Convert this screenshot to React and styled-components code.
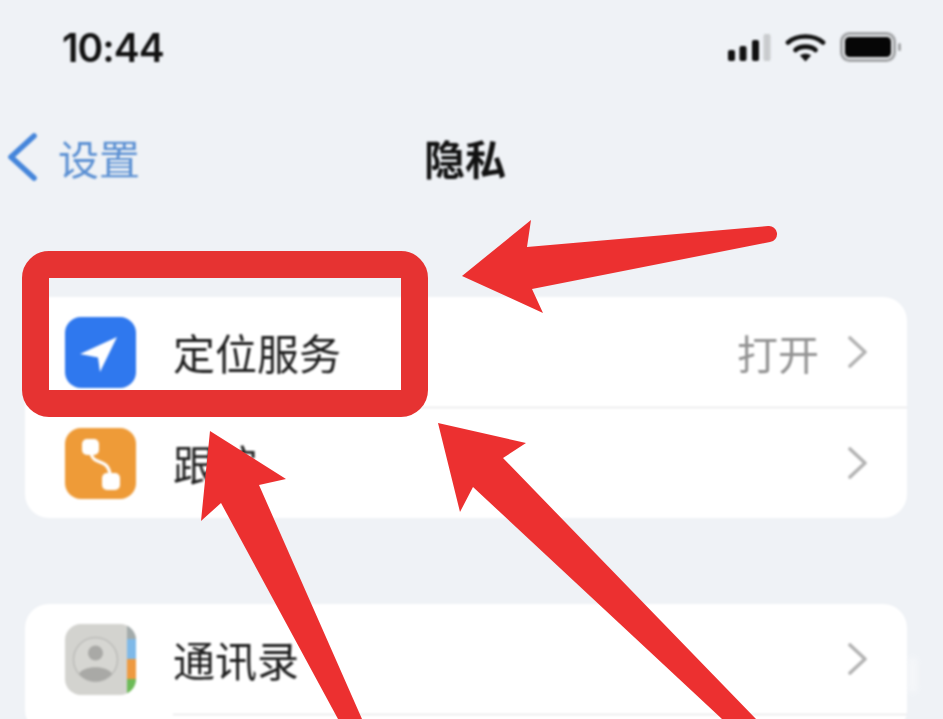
import React from 'react'
import styled, { createGlobalStyle } from 'styled-components'

const GlobalStyle = createGlobalStyle`
    html, body {
        margin: 0;
        padding: 0;
        background: #eff2f6;
    }
`;

const Page = styled.div`
    position: relative;
    width: 943px;
    height: 719px;
    overflow: hidden;
    background: #eff2f6;
    font-family: "Noto Sans CJK SC", "Liberation Sans", sans-serif;
    color: #1f1f1f;
`;

const Content = styled.div`
    filter: blur(0.8px);
`;

const StatusBar = styled.div`
    height: 94px;
    display: flex;
    align-items: center;
    justify-content: space-between;
    padding: 0 41px 0 62px;
    box-sizing: border-box;
`;

const Time = styled.span`
    font-family: Inter, "Liberation Sans", sans-serif;
    font-size: 39px;
    font-weight: 600;
    letter-spacing: -1px;
    color: #111;
`;

const NavBar = styled.div`
    height: 126px;
    display: flex;
    align-items: center;
    padding-left: 7px;
`;

const Back = styled.div`
    width: 417px;
    display: flex;
    align-items: center;
    gap: 21px;
    font-size: 41px;
    line-height: 48px;
    color: #5a8fd2;
`;

const Title = styled.h1`
    margin: 0;
    font-size: 41px;
    line-height: 48px;
    font-weight: 700;
    color: #111;
`;

const Card = styled.div`
    margin: ${(p) => p.$top}px 36px 0 25px;
    min-height: ${(p) => p.$minHeight || 0}px;
    background: #fff;
    border-radius: 24px;
    overflow: hidden;
`;

const Row = styled.div`
    height: ${(p) => (p.$divider ? 111 : 110)}px;
    display: flex;
    padding-left: 40px;
    box-sizing: border-box;
`;

const IconBox = styled.div`
    flex: none;
    align-self: center;
    width: 71px;
    height: 71px;
    margin-right: 37px;
    border-radius: 16px;
    overflow: hidden;
    background: ${(p) => p.$bg};
`;

const Body = styled.div`
    flex: 1;
    display: flex;
    align-items: center;
    justify-content: space-between;
    padding-right: 40px;
    border-bottom: ${(p) => (p.$divider ? '1px solid #dedee0' : 'none')};
`;

const Label = styled.span`
    font-size: 42px;
    line-height: 50px;
    color: #1e1e1e;
`;

const Right = styled.div`
    display: flex;
    align-items: center;
    gap: 29px;
`;

const Value = styled.span`
    font-size: 41px;
    line-height: 48px;
    color: #939393;
`;

const Highlight = styled.div`
    position: absolute;
    left: 22px;
    top: 251px;
    width: 406px;
    height: 166px;
    box-sizing: border-box;
    border: 27px solid #e63332;
    border-radius: 27px;
`;

const Arrows = styled.svg`
    position: absolute;
    left: 0;
    top: 0;
    filter: blur(0.4px);
`;

// the watermark is cut off and unreadable in the shot, only a pale smudge is left
const WatermarkSmudge = styled.div`
    position: absolute;
    left: 908px;
    top: 658px;
    width: 9px;
    height: 34px;
    background: #fff;
    opacity: 0.4;
    filter: blur(3px);
`;

const StatusIcons = styled.div`
    display: flex;
    align-items: center;
    gap: 14px;
`;

const Signal = () => (
  <svg width="43" height="30" viewBox="0 0 43 30">
    <rect x="0" y="18" width="7" height="11" rx="2" fill="#111" />
    <rect x="11.5" y="14" width="7" height="15" rx="2" fill="#111" />
    <rect x="24" y="8" width="7" height="21" rx="2" fill="#111" />
    <rect x="35.5" y="2" width="7" height="27" rx="2" fill="#c9cbce" />
  </svg>
);

const Wifi = () => (
  <svg width="41" height="30" viewBox="0 0 41 30" fill="none">
    <path d="M3 10.5 C 12 2.5, 29 2.5, 38 10.5" stroke="#111" strokeWidth="4.6" strokeLinecap="round" />
    <path d="M10.5 18 C 15 13.5, 26 13.5, 30.5 18" stroke="#111" strokeWidth="4.6" strokeLinecap="round" />
    <path d="M15 23.5 L20.5 29.5 L26 23.5 C 23 21, 18 21, 15 23.5 Z" fill="#111" />
  </svg>
);

const Battery = () => (
  <svg width="62" height="30" viewBox="0 0 62 30">
    <rect x="1.5" y="1.5" width="53" height="27" rx="8" fill="#e8eaec" stroke="#a4a6a8" strokeWidth="3" />
    <rect x="5" y="5" width="46" height="20" rx="4.5" fill="#060606" />
    <rect x="58" y="11" width="3" height="8" rx="1.5" fill="#a4a6a8" />
  </svg>
);

const BackChevron = () => (
  <svg width="30" height="48" viewBox="0 0 30 48" fill="none">
    <path d="M27 3 L4 24 L27 45" stroke="#4585da" strokeWidth="5.6" strokeLinecap="round" strokeLinejoin="round" />
  </svg>
);

const RowChevron = () => (
  <svg width="19" height="32" viewBox="0 0 19 32" fill="none">
    <path d="M2 2 L17 16 L2 30" stroke="#b3b3b3" strokeWidth="3.6" strokeLinecap="round" strokeLinejoin="round" />
  </svg>
);

const LocationGlyph = () => (
  <svg width="71" height="71" viewBox="0 0 71 71">
    <path d="M52 20 L15 37 L33 40.5 L35 55 Z" fill="#fff" />
  </svg>
);

const RouteGlyph = () => (
  <svg width="71" height="71" viewBox="0 0 71 71" fill="none">
    <rect x="17" y="11" width="17" height="16" rx="5" fill="#fff" />
    <rect x="37" y="45" width="18" height="17" rx="5" fill="#fff" />
    <path d="M26 25 C 28 38, 42 29, 45 46" stroke="#fff" strokeWidth="3.2" />
  </svg>
);

const ContactsGlyph = () => (
  <svg width="71" height="71" viewBox="0 0 71 71">
    <rect x="62" y="0" width="9" height="15" fill="#a3abab" />
    <rect x="62" y="15" width="9" height="20" fill="#7fb9e8" />
    <rect x="62" y="35" width="9" height="20" fill="#ee9a41" />
    <rect x="62" y="55" width="9" height="16" fill="#6dbb58" />
    <circle cx="30.5" cy="35.5" r="22" fill="#d6d6d2" stroke="#bcbcb9" strokeWidth="1.5" />
    <circle cx="30.5" cy="29" r="7.5" fill="#a9a9a6" />
    <path d="M14 50 C 18 41, 43 41, 47 50 C 38 60, 23 60, 14 50 Z" fill="#a9a9a6" />
  </svg>
);

const App = () => {
  return (
    <Page>
      <GlobalStyle />
      <Content>
        <StatusBar>
          <Time>10:44</Time>
          <StatusIcons>
            <Signal />
            <Wifi />
            <Battery />
          </StatusIcons>
        </StatusBar>
        <NavBar>
          <Back>
            <BackChevron />
            <span>设置</span>
          </Back>
          <Title>隐私</Title>
        </NavBar>
        <Card $top={77}>
          <Row $divider>
            <IconBox $bg="#2f78ee"><LocationGlyph /></IconBox>
            <Body $divider>
              <Label>定位服务</Label>
              <Right>
                <Value>打开</Value>
                <RowChevron />
              </Right>
            </Body>
          </Row>
          <Row>
            <IconBox $bg="#ee9b38"><RouteGlyph /></IconBox>
            <Body>
              <Label>跟踪</Label>
              <Right>
                <RowChevron />
              </Right>
            </Body>
          </Row>
        </Card>
        <Card $top={86} $minHeight={130}>
          <Row $divider>
            <IconBox $bg="#d3d3cf"><ContactsGlyph /></IconBox>
            <Body $divider>
              <Label>通讯录</Label>
              <Right>
                <RowChevron />
              </Right>
            </Body>
          </Row>
        </Card>
      </Content>
      <WatermarkSmudge />
      <Highlight />
      <Arrows width="943" height="719" viewBox="0 0 943 719">
        <path
          d="M462 276 L531 220 L527 247 L768 226 A8 8 0 0 1 770 242 L532 289 L543 313 Z"
          fill="#ec3030"
        />
        <path d="M210 431 L286 479 L259 485 L362 719 L338 719 L221 503 L201 521 Z" fill="#ec3030" />
        <path d="M438 423 L526 443 L503 458 L756 719 L722 719 L473 487 L460 512 Z" fill="#ec3030" />
      </Arrows>
    </Page>
  )
}

export default App
